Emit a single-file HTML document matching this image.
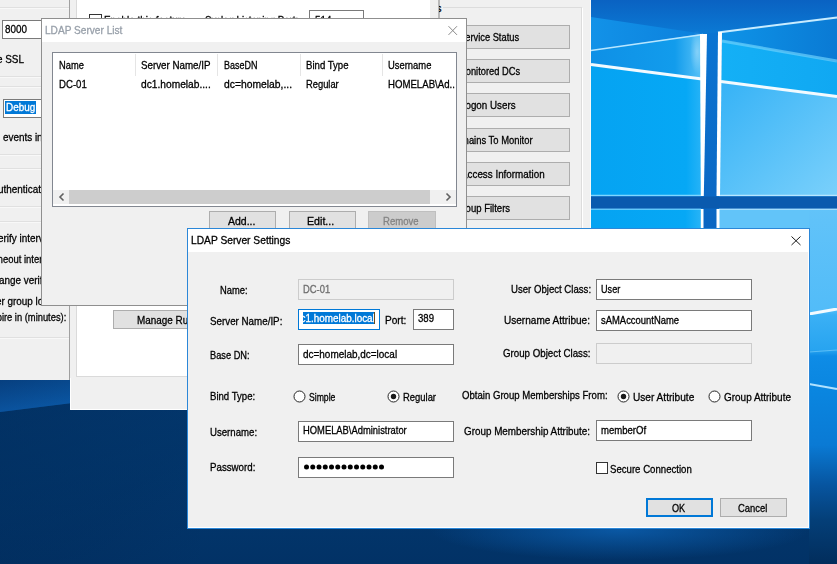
<!DOCTYPE html>
<html><head><meta charset="utf-8"><style>
html,body{margin:0;padding:0;width:837px;height:564px;overflow:hidden;background:#02336a;}
.a{position:absolute;}
.t{white-space:pre;font-family:'Liberation Sans', sans-serif;transform-origin:0 0;-webkit-text-stroke:0.3px currentColor;}
svg{position:absolute;left:0;top:0;}
</style></head><body>
<svg width="837" height="564" viewBox="0 0 837 564">
<defs>
 <linearGradient id="gnavy" x1="0" y1="0" x2="0" y2="1">
  <stop offset="0" stop-color="#04427e"/><stop offset="0.67" stop-color="#043f7a"/><stop offset="0.8" stop-color="#033a72"/><stop offset="1" stop-color="#023266"/>
 </linearGradient>
 <linearGradient id="gwedge" x1="0" y1="0" x2="1" y2="0">
  <stop offset="0" stop-color="#0a4a8e"/><stop offset="1" stop-color="#0b5aa6"/>
 </linearGradient>
 <linearGradient id="gwedge2" x1="0" y1="0" x2="1" y2="0"><stop offset="0" stop-color="#1292e8"/><stop offset="1" stop-color="#0c80dc"/></linearGradient>
 <linearGradient id="gvbar" x1="0" y1="0" x2="0" y2="1"><stop offset="0" stop-color="#0a74d2"/><stop offset="1" stop-color="#0b66c2"/></linearGradient>
 <linearGradient id="gmid" x1="0" y1="0" x2="1" y2="0"><stop offset="0" stop-color="#14b0f6"/><stop offset="1" stop-color="#10a8f2"/></linearGradient>
 <linearGradient id="gwedgev" x1="0" y1="0" x2="0" y2="1"><stop offset="0" stop-color="#03306a" stop-opacity="0.45"/><stop offset="1" stop-color="#0b5cae" stop-opacity="0.5"/></linearGradient>
 <linearGradient id="gleftdark" x1="0" y1="0" x2="1" y2="1"><stop offset="0" stop-color="#012a58" stop-opacity="0.6"/><stop offset="0.6" stop-color="#012a58" stop-opacity="0.35"/><stop offset="1" stop-color="#012a58" stop-opacity="0"/></linearGradient>
 <linearGradient id="gtop" gradientUnits="userSpaceOnUse" x1="0" y1="0" x2="0" y2="40"><stop offset="0" stop-color="#0a62c2"/><stop offset="1" stop-color="#0b7ed8"/></linearGradient>
 <linearGradient id="gul" x1="0" y1="0" x2="1" y2="0">
  <stop offset="0" stop-color="#05a3f2"/><stop offset="0.85" stop-color="#06a8f5"/><stop offset="1" stop-color="#2ab4f7"/>
 </linearGradient>
 <linearGradient id="gul2" x1="0" y1="0" x2="1" y2="0">
  <stop offset="0" stop-color="#0e90e6"/><stop offset="0.75" stop-color="#129cec"/><stop offset="1" stop-color="#5cc4f8"/>
 </linearGradient>
 <linearGradient id="gur" x1="0" y1="0" x2="1" y2="1">
  <stop offset="0" stop-color="#35b2f6"/><stop offset="1" stop-color="#7ad0fb"/>
 </linearGradient>
 <linearGradient id="gur2" x1="0" y1="0" x2="1" y2="0">
  <stop offset="0" stop-color="#0e94e8"/><stop offset="1" stop-color="#0a7ad4"/>
 </linearGradient>
 <linearGradient id="gright" x1="0" y1="0" x2="0" y2="1">
  <stop offset="0" stop-color="#62c3f9"/><stop offset="0.285" stop-color="#52bcf8"/><stop offset="0.299" stop-color="#3ab0f5"/>
  <stop offset="0.397" stop-color="#28a4f0"/><stop offset="0.414" stop-color="#0e8ce6"/><stop offset="0.510" stop-color="#0a86e0"/><stop offset="0.665" stop-color="#0a7ad4"/><stop offset="0.777" stop-color="#0755a0"/><stop offset="0.876" stop-color="#043f78"/><stop offset="1" stop-color="#022d5c"/>
 </linearGradient>
 <radialGradient id="gglow" cx="0.5" cy="0.5" r="0.5">
  <stop offset="0" stop-color="#0b5eae" stop-opacity="0.85"/><stop offset="1" stop-color="#0b5eae" stop-opacity="0"/>
 </radialGradient>
 <radialGradient id="gwglow" cx="0.5" cy="0.5" r="0.5">
  <stop offset="0" stop-color="#ffffff" stop-opacity="0.7"/><stop offset="1" stop-color="#ffffff" stop-opacity="0"/>
 </radialGradient>
 <filter id="blur1"><feGaussianBlur stdDeviation="0.7"/></filter>
 <filter id="blur2"><feGaussianBlur stdDeviation="2"/></filter>
</defs>
<rect x="0" y="0" width="837" height="564" fill="url(#gnavy)"/>
<rect x="0" y="400" width="200" height="164" fill="url(#gleftdark)"/>
<polygon points="0,378 72,378 72,403 0,412" fill="url(#gwedge)"/>
<polygon points="0,378 72,378 72,403 0,412" fill="url(#gwedgev)"/>
<ellipse cx="620" cy="530" rx="190" ry="30" fill="url(#gglow)"/>
<rect x="591" y="0" width="246" height="229" fill="url(#gtop)"/>
<polygon points="591,17 704,34 591,51" fill="url(#gwedge2)"/>
<polygon points="591,50 703,34 703,65 591,65" fill="url(#gul2)"/>
<polygon points="591,64.5 703,79 703,196 591,196" fill="url(#gul)"/>
<polygon points="591,50 703,34 703,79 591,64.5" fill="url(#gul2)"/>
<polygon points="718,32 837,17 837,62 722,40" fill="url(#gur2)"/>
<polygon points="722,40 837,62 837,97 721,81.5" fill="url(#gmid)"/>
<polygon points="721,81.5 837,97 837,196 719,196" fill="url(#gur)"/>
<line x1="722" y1="41" x2="837" y2="61" stroke="#6cd0fc" stroke-width="3" opacity="0.7" filter="url(#blur1)"/>
<polygon points="705,34 718,32 717,229 703,229" fill="url(#gvbar)"/>
<polygon points="591,209 702,209 702,229 591,229" fill="url(#gul)"/>
<polygon points="719,209 837,209 837,229 719,229" fill="#62c4f9"/>
<rect x="809" y="209" width="28" height="355" fill="url(#gright)"/>
<line x1="591" y1="50.5" x2="703" y2="34.5" stroke="#b8e6ff" stroke-width="1.5" filter="url(#blur1)"/>
<line x1="718" y1="32.5" x2="837" y2="17.5" stroke="#c8ecff" stroke-width="2" filter="url(#blur1)"/>
<line x1="591" y1="64.5" x2="702" y2="79" stroke="#f2faff" stroke-width="3" filter="url(#blur1)"/>
<line x1="721" y1="81.5" x2="837" y2="96.5" stroke="#f2faff" stroke-width="3" filter="url(#blur1)"/>
<line x1="591" y1="195.5" x2="701" y2="195.5" stroke="#7fd6ff" stroke-width="1.5"/>
<line x1="591" y1="209" x2="701" y2="209" stroke="#7fd6ff" stroke-width="1.5"/>
<line x1="719" y1="195.5" x2="837" y2="195.5" stroke="#b8e6ff" stroke-width="1.5"/>
<line x1="719" y1="209" x2="837" y2="209" stroke="#b8e6ff" stroke-width="1.5"/>
<ellipse cx="697" cy="52" rx="7" ry="22" fill="url(#gwglow)" opacity="0.45"/>
<polygon points="700,34 707,34 703.8,196 700.8,196" fill="#ffffff" filter="url(#blur1)"/>
<polygon points="700.8,209 703.5,209 703.5,229 700.8,229" fill="#ffffff" filter="url(#blur1)"/>
<polygon points="718,32 722,32 720,196 716.5,196" fill="#ffffff" filter="url(#blur1)"/>
<polygon points="716.5,209 719.5,209 719.5,229 716.5,229" fill="#ffffff" filter="url(#blur1)"/>
<rect x="591" y="196.5" width="246" height="12" fill="#0a5aae"/>
<line x1="809" y1="314" x2="837" y2="309" stroke="#f2faff" stroke-width="3" filter="url(#blur1)"/>
<line x1="809" y1="352" x2="837" y2="350" stroke="#7fd0fa" stroke-width="1.2" opacity="0.6" filter="url(#blur1)"/>
<line x1="809" y1="384" x2="837" y2="389" stroke="#b0e2ff" stroke-width="2" filter="url(#blur1)"/>
</svg>
<div class="a" style="left:0px;top:0px;width:69px;height:380px;background:#f0f0f0;"></div>
<div class="a" style="left:69px;top:0px;width:1px;height:380px;background:#a0a0a0;"></div>
<div class="a" style="left:0px;top:7px;width:69px;height:1px;background:#e0e0e0;"></div>
<div class="a" style="left:0px;top:8px;width:69px;height:1px;background:#f8f8f8;"></div>
<div class="a" style="left:0px;top:76px;width:69px;height:1px;background:#e0e0e0;"></div>
<div class="a" style="left:0px;top:77px;width:69px;height:1px;background:#f8f8f8;"></div>
<div class="a" style="left:0px;top:86px;width:69px;height:1px;background:#e0e0e0;"></div>
<div class="a" style="left:0px;top:87px;width:69px;height:1px;background:#f8f8f8;"></div>
<div class="a" style="left:0px;top:154px;width:69px;height:1px;background:#e0e0e0;"></div>
<div class="a" style="left:0px;top:155px;width:69px;height:1px;background:#f8f8f8;"></div>
<div class="a" style="left:0px;top:168px;width:69px;height:1px;background:#e0e0e0;"></div>
<div class="a" style="left:0px;top:169px;width:69px;height:1px;background:#f8f8f8;"></div>
<div class="a" style="left:0px;top:206px;width:69px;height:1px;background:#e0e0e0;"></div>
<div class="a" style="left:0px;top:207px;width:69px;height:1px;background:#f8f8f8;"></div>
<div class="a" style="left:0px;top:221px;width:69px;height:1px;background:#e0e0e0;"></div>
<div class="a" style="left:0px;top:222px;width:69px;height:1px;background:#f8f8f8;"></div>
<div class="a" style="left:0px;top:337px;width:69px;height:1px;background:#e0e0e0;"></div>
<div class="a" style="left:0px;top:338px;width:69px;height:1px;background:#f8f8f8;"></div>
<div class="a" style="left:2px;top:20px;width:60px;height:19px;background:#fff;box-sizing:border-box;border:1px solid #7a7a7a;"></div>
<div class="a t" style="left:5.00px;top:24px;font-size:11px;line-height:11px;color:#000;transform:scaleX(0.8952);">8000</div>
<div class="a t" style="left:-3.00px;top:54px;font-size:11px;line-height:11px;color:#000;transform:scaleX(0.9000);">e SSL</div>
<div class="a" style="left:3px;top:99px;width:60px;height:19px;background:#fff;box-sizing:border-box;border:1px solid #7a7a7a;"></div>
<div class="a" style="left:5px;top:101px;width:31px;height:13px;background:#0078d7;"></div>
<div class="a t" style="left:6.00px;top:102px;font-size:11px;line-height:11px;color:#fff;transform:scaleX(0.9000);">Debug</div>
<div class="a t" style="left:3.00px;top:132px;font-size:11px;line-height:11px;color:#000;transform:scaleX(0.9000);">events in</div>
<div class="a t" style="left:-2.50px;top:184px;font-size:11px;line-height:11px;color:#000;transform:scaleX(0.9000);">uthenticat</div>
<div class="a t" style="left:-2.00px;top:233px;font-size:11px;line-height:11px;color:#000;transform:scaleX(0.9000);">erify interv</div>
<div class="a t" style="left:-5.50px;top:254px;font-size:11px;line-height:11px;color:#000;transform:scaleX(0.8600);">meout inter</div>
<div class="a t" style="left:-1.00px;top:275px;font-size:11px;line-height:11px;color:#000;transform:scaleX(0.9000);">ange verif</div>
<div class="a t" style="left:-4.50px;top:296px;font-size:11px;line-height:11px;color:#000;transform:scaleX(0.9000);">er group lo</div>
<div class="a t" style="left:-8.25px;top:312px;font-size:11px;line-height:11px;color:#000;transform:scaleX(0.8500);">xpire in (minutes):</div>
<div class="a" style="left:70px;top:0px;width:521px;height:410px;background:#f0f0f0;"></div>
<div class="a" style="left:70px;top:409px;width:521px;height:1px;background:#ffffff;"></div>
<div class="a" style="left:70px;top:378px;width:1px;height:32px;background:#ffffff;"></div>
<div class="a" style="left:590px;top:0px;width:1px;height:410px;background:#f8f8f8;"></div>
<div class="a" style="left:77px;top:0px;width:353px;height:376px;background:#ffffff;"></div>
<div class="a" style="left:76px;top:0px;width:1px;height:377px;background:#dadada;"></div>
<div class="a" style="left:76px;top:376px;width:355px;height:1px;background:#dadada;"></div>
<div class="a" style="left:438px;top:0px;width:2px;height:410px;background:#b8b8b8;"></div>
<div class="a" style="left:443px;top:7px;width:139px;height:1px;background:#dcdcdc;"></div>
<div class="a" style="left:581px;top:7px;width:1px;height:380px;background:#dcdcdc;"></div>
<div class="a" style="left:582px;top:8px;width:1px;height:380px;background:#ffffff;"></div>
<div class="a" style="left:439px;top:0;width:3px;height:15px;overflow:hidden"><div class="a t" style="left:-3px;top:3px;font-size:11px;line-height:11px;color:#000">s</div></div>
<div class="a" style="left:89px;top:14px;width:13px;height:13px;background:#fff;box-sizing:border-box;border:1px solid #333;"></div>
<div class="a t" style="left:104.00px;top:15px;font-size:11px;line-height:11px;color:#000;transform:scaleX(0.9000);">Enable this feature</div>
<div class="a t" style="left:205.00px;top:15px;font-size:11px;line-height:11px;color:#000;transform:scaleX(0.8746);">Syslog Listening Port:</div>
<div class="a" style="left:309px;top:10px;width:55px;height:20px;background:#fff;box-sizing:border-box;border:1px solid #7a7a7a;"></div>
<div class="a t" style="left:315.00px;top:15px;font-size:11px;line-height:11px;color:#000;transform:scaleX(0.9000);">514</div>
<div class="a" style="left:400px;top:25px;width:170px;height:24px;background:#e1e1e1;box-sizing:border-box;border:1px solid #adadad;"></div>
<div class="a t" style="left:458.70px;top:32px;font-size:11px;line-height:11px;color:#000;transform:scaleX(0.8471);">Service Status</div>
<div class="a" style="left:400px;top:59px;width:170px;height:24px;background:#e1e1e1;box-sizing:border-box;border:1px solid #adadad;"></div>
<div class="a t" style="left:457.50px;top:66px;font-size:11px;line-height:11px;color:#000;transform:scaleX(0.8462);">Monitored DCs</div>
<div class="a" style="left:400px;top:93px;width:170px;height:24px;background:#e1e1e1;box-sizing:border-box;border:1px solid #adadad;"></div>
<div class="a t" style="left:459.50px;top:100px;font-size:11px;line-height:11px;color:#000;transform:scaleX(0.8907);">Logon Users</div>
<div class="a" style="left:400px;top:128px;width:170px;height:24px;background:#e1e1e1;box-sizing:border-box;border:1px solid #adadad;"></div>
<div class="a t" style="left:449.00px;top:135px;font-size:11px;line-height:11px;color:#000;transform:scaleX(0.8558);">Domains To Monitor</div>
<div class="a" style="left:400px;top:162px;width:170px;height:24px;background:#e1e1e1;box-sizing:border-box;border:1px solid #adadad;"></div>
<div class="a t" style="left:461.30px;top:169px;font-size:11px;line-height:11px;color:#000;transform:scaleX(0.8938);">Access Information</div>
<div class="a" style="left:400px;top:196px;width:170px;height:24px;background:#e1e1e1;box-sizing:border-box;border:1px solid #adadad;"></div>
<div class="a t" style="left:454.50px;top:203px;font-size:11px;line-height:11px;color:#000;transform:scaleX(0.8662);">Group Filters</div>
<div class="a" style="left:113px;top:310px;width:120px;height:19px;background:#e1e1e1;box-sizing:border-box;border:1px solid #adadad;"></div>
<div class="a t" style="left:136.70px;top:315px;font-size:11px;line-height:11px;color:#000;transform:scaleX(0.9000);">Manage Rules</div>
<div class="a" style="left:41px;top:18px;width:426px;height:288px;background:#f0f0f0;box-sizing:border-box;border:1px solid #8f8f8f;"></div>
<div class="a" style="left:42px;top:19px;width:424px;height:23px;background:#ffffff;"></div>
<div class="a t" style="left:45.00px;top:25px;font-size:11px;line-height:11px;color:#98a0aa;transform:scaleX(0.9193);">LDAP Server List</div>
<svg class="a" style="left:446.5px;top:24.5px" width="12" height="12"><path d="M1.5 1.2L10 9.9M10 1.2L1.5 9.9" stroke="#8a8a8a" stroke-width="1"/></svg>
<div class="a" style="left:52px;top:52px;width:405px;height:155px;background:#ffffff;box-sizing:border-box;border:1px solid #828790;"></div>
<div class="a" style="left:135px;top:54px;width:1px;height:22px;background:#e5e5e5;"></div>
<div class="a" style="left:217px;top:54px;width:1px;height:22px;background:#e5e5e5;"></div>
<div class="a" style="left:300px;top:54px;width:1px;height:22px;background:#e5e5e5;"></div>
<div class="a" style="left:382px;top:54px;width:1px;height:22px;background:#e5e5e5;"></div>
<div class="a t" style="left:59.00px;top:60px;font-size:11px;line-height:11px;color:#000;transform:scaleX(0.8452);">Name</div>
<div class="a t" style="left:141.00px;top:60px;font-size:11px;line-height:11px;color:#000;transform:scaleX(0.8882);">Server Name/IP</div>
<div class="a t" style="left:224.00px;top:60px;font-size:11px;line-height:11px;color:#000;transform:scaleX(0.8168);">BaseDN</div>
<div class="a t" style="left:306.00px;top:60px;font-size:11px;line-height:11px;color:#000;transform:scaleX(0.8729);">Bind Type</div>
<div class="a t" style="left:388.00px;top:60px;font-size:11px;line-height:11px;color:#000;transform:scaleX(0.8553);">Username</div>
<div class="a t" style="left:59.00px;top:79px;font-size:11px;line-height:11px;color:#000;transform:scaleX(0.8747);">DC-01</div>
<div class="a t" style="left:141.00px;top:79px;font-size:11px;line-height:11px;color:#000;transform:scaleX(0.9274);">dc1.homelab....</div>
<div class="a t" style="left:224.00px;top:79px;font-size:11px;line-height:11px;color:#000;transform:scaleX(0.9392);">dc=homelab,...</div>
<div class="a t" style="left:306.00px;top:79px;font-size:11px;line-height:11px;color:#000;transform:scaleX(0.8492);">Regular</div>
<div class="a t" style="left:388.00px;top:79px;font-size:11px;line-height:11px;color:#000;transform:scaleX(0.8748);">HOMELAB\Ad..</div>
<div class="a" style="left:53px;top:190px;width:403px;height:14px;background:#f0f0f0;"></div>
<div class="a" style="left:69px;top:190px;width:361px;height:14px;background:#cdcdcd;"></div>
<svg class="a" style="left:57px;top:192px" width="10" height="10"><path d="M6.5 1.5L3 5L6.5 8.5" fill="none" stroke="#606060" stroke-width="1.6"/></svg>
<svg class="a" style="left:443px;top:192px" width="10" height="10"><path d="M3.5 1.5L7 5L3.5 8.5" fill="none" stroke="#606060" stroke-width="1.6"/></svg>
<div class="a" style="left:209px;top:211px;width:67px;height:24px;background:#e1e1e1;box-sizing:border-box;border:1px solid #adadad;"></div>
<div class="a t" style="left:228.00px;top:216px;font-size:11px;line-height:11px;color:#000;transform:scaleX(0.9552);">Add...</div>
<div class="a" style="left:289px;top:211px;width:67px;height:24px;background:#e1e1e1;box-sizing:border-box;border:1px solid #adadad;"></div>
<div class="a t" style="left:307.30px;top:216px;font-size:11px;line-height:11px;color:#000;transform:scaleX(0.9691);">Edit...</div>
<div class="a" style="left:368px;top:211px;width:68px;height:24px;background:#cccccc;box-sizing:border-box;border:1px solid #bfbfbf;"></div>
<div class="a t" style="left:383.20px;top:216px;font-size:11px;line-height:11px;color:#838383;transform:scaleX(0.8667);">Remove</div>
<div class="a" style="left:187px;top:228px;width:623px;height:301px;background:#f0f0f0;box-sizing:border-box;border:1px solid #2b87d8;"></div>
<div class="a" style="left:808px;top:252px;width:1px;height:276px;background:#ffffff;"></div>
<div class="a" style="left:188px;top:527px;width:621px;height:1px;background:#ffffff;"></div>
<div class="a" style="left:188px;top:229px;width:621px;height:23px;background:#ffffff;"></div>
<div class="a t" style="left:191.25px;top:235px;font-size:11px;line-height:11px;color:#000;transform:scaleX(0.9303);">LDAP Server Settings</div>
<svg class="a" style="left:790px;top:235px" width="12" height="12"><path d="M1.5 1.5L10.5 10M10.5 1.5L1.5 10" stroke="#1a1a1a" stroke-width="1"/></svg>
<div class="a t" style="left:220.00px;top:285px;font-size:11px;line-height:11px;color:#000;transform:scaleX(0.8503);">Name:</div>
<div class="a t" style="left:209.70px;top:316px;font-size:11px;line-height:11px;color:#000;transform:scaleX(0.8899);">Server Name/IP:</div>
<div class="a t" style="left:385.00px;top:315px;font-size:11px;line-height:11px;color:#000;transform:scaleX(0.9191);">Port:</div>
<div class="a t" style="left:209.70px;top:350px;font-size:11px;line-height:11px;color:#000;transform:scaleX(0.8401);">Base DN:</div>
<div class="a t" style="left:209.70px;top:391px;font-size:11px;line-height:11px;color:#000;transform:scaleX(0.8725);">Bind Type:</div>
<div class="a t" style="left:209.70px;top:427px;font-size:11px;line-height:11px;color:#000;transform:scaleX(0.8746);">Username:</div>
<div class="a t" style="left:209.70px;top:462px;font-size:11px;line-height:11px;color:#000;transform:scaleX(0.8831);">Password:</div>
<div class="a t" style="left:510.70px;top:284px;font-size:11px;line-height:11px;color:#000;transform:scaleX(0.8730);">User Object Class:</div>
<div class="a t" style="left:504.00px;top:315px;font-size:11px;line-height:11px;color:#000;transform:scaleX(0.9134);">Username Attribue:</div>
<div class="a t" style="left:503.00px;top:348px;font-size:11px;line-height:11px;color:#000;transform:scaleX(0.8840);">Group Object Class:</div>
<div class="a t" style="left:462.00px;top:390px;font-size:11px;line-height:11px;color:#000;transform:scaleX(0.8721);">Obtain Group Memberships From:</div>
<div class="a t" style="left:464.00px;top:426px;font-size:11px;line-height:11px;color:#000;transform:scaleX(0.8961);">Group Membership Attribute:</div>
<div class="a t" style="left:610.00px;top:464px;font-size:11px;line-height:11px;color:#000;transform:scaleX(0.8743);">Secure Connection</div>
<div class="a" style="left:298px;top:279px;width:156px;height:21px;background:#f0f0f0;box-sizing:border-box;border:1px solid #cccccc;"></div>
<div class="a t" style="left:303.00px;top:284px;font-size:11px;line-height:11px;color:#6d6d6d;transform:scaleX(0.8526);">DC-01</div>
<div class="a" style="left:298px;top:309px;width:82px;height:21px;background:#ffffff;box-sizing:border-box;border:1px solid #0078d7;"></div>
<div class="a" style="left:303px;top:312px;width:72px;height:12px;background:#0078d7;"></div>
<div class="a" style="left:374px;top:312px;width:1px;height:12px;background:#6b4a1a;"></div>
<div class="a" style="left:300px;top:311px;width:74px;height:16px;overflow:hidden"><div class="a t" style="left:-5px;top:2px;font-size:11px;line-height:11px;color:#fff;transform:scaleX(0.9)">dc1.homelab.local</div></div>
<div class="a" style="left:413px;top:309px;width:41px;height:21px;background:#ffffff;box-sizing:border-box;border:1px solid #7a7a7a;"></div>
<div class="a t" style="left:418.30px;top:313px;font-size:11px;line-height:11px;color:#000;transform:scaleX(0.8719);">389</div>
<div class="a" style="left:298px;top:344px;width:156px;height:21px;background:#ffffff;box-sizing:border-box;border:1px solid #7a7a7a;"></div>
<div class="a t" style="left:303.00px;top:349px;font-size:11px;line-height:11px;color:#000;transform:scaleX(0.9052);">dc=homelab,dc=local</div>
<div class="a" style="left:298px;top:421px;width:156px;height:21px;background:#ffffff;box-sizing:border-box;border:1px solid #7a7a7a;"></div>
<div class="a t" style="left:303.00px;top:425px;font-size:11px;line-height:11px;color:#000;transform:scaleX(0.8526);">HOMELAB\Administrator</div>
<div class="a" style="left:298px;top:457px;width:156px;height:21px;background:#ffffff;box-sizing:border-box;border:1px solid #7a7a7a;"></div>
<svg class="a" style="left:0;top:0" width="837" height="564"><circle cx="306.50" cy="467" r="2.5" fill="#000"/><circle cx="312.75" cy="467" r="2.5" fill="#000"/><circle cx="319.00" cy="467" r="2.5" fill="#000"/><circle cx="325.25" cy="467" r="2.5" fill="#000"/><circle cx="331.50" cy="467" r="2.5" fill="#000"/><circle cx="337.75" cy="467" r="2.5" fill="#000"/><circle cx="344.00" cy="467" r="2.5" fill="#000"/><circle cx="350.25" cy="467" r="2.5" fill="#000"/><circle cx="356.50" cy="467" r="2.5" fill="#000"/><circle cx="362.75" cy="467" r="2.5" fill="#000"/><circle cx="369.00" cy="467" r="2.5" fill="#000"/><circle cx="375.25" cy="467" r="2.5" fill="#000"/><circle cx="381.50" cy="467" r="2.5" fill="#000"/></svg>
<div class="a" style="left:596px;top:279px;width:156px;height:21px;background:#ffffff;box-sizing:border-box;border:1px solid #7a7a7a;"></div>
<div class="a t" style="left:600.80px;top:284px;font-size:11px;line-height:11px;color:#000;transform:scaleX(0.8276);">User</div>
<div class="a" style="left:596px;top:310px;width:156px;height:21px;background:#ffffff;box-sizing:border-box;border:1px solid #7a7a7a;"></div>
<div class="a t" style="left:600.80px;top:315px;font-size:11px;line-height:11px;color:#000;transform:scaleX(0.8574);">sAMAccountName</div>
<div class="a" style="left:596px;top:343px;width:156px;height:21px;background:#f0f0f0;box-sizing:border-box;border:1px solid #cccccc;"></div>
<div class="a" style="left:596px;top:420px;width:156px;height:21px;background:#ffffff;box-sizing:border-box;border:1px solid #7a7a7a;"></div>
<div class="a t" style="left:600.80px;top:425px;font-size:11px;line-height:11px;color:#000;transform:scaleX(0.8677);">memberOf</div>
<svg class="a" style="left:293px;top:390px" width="13" height="13"><circle cx="6.5" cy="6.5" r="5.5" fill="#fff" stroke="#262626" stroke-width="1"/></svg>
<div class="a t" style="left:308.70px;top:392px;font-size:11px;line-height:11px;color:#000;transform:scaleX(0.7849);">Simple</div>
<svg class="a" style="left:387px;top:390px" width="13" height="13"><circle cx="6.5" cy="6.5" r="5.5" fill="#fff" stroke="#262626" stroke-width="1"/><circle cx="6.5" cy="6.5" r="2.7" fill="#1a1a1a"/></svg>
<div class="a t" style="left:402.50px;top:392px;font-size:11px;line-height:11px;color:#000;transform:scaleX(0.8570);">Regular</div>
<svg class="a" style="left:617px;top:390px" width="13" height="13"><circle cx="6.5" cy="6.5" r="5.5" fill="#fff" stroke="#262626" stroke-width="1"/><circle cx="6.5" cy="6.5" r="2.7" fill="#1a1a1a"/></svg>
<div class="a t" style="left:633.00px;top:392px;font-size:11px;line-height:11px;color:#000;transform:scaleX(0.9191);">User Attribute</div>
<svg class="a" style="left:708px;top:390px" width="13" height="13"><circle cx="6.5" cy="6.5" r="5.5" fill="#fff" stroke="#262626" stroke-width="1"/></svg>
<div class="a t" style="left:723.60px;top:392px;font-size:11px;line-height:11px;color:#000;transform:scaleX(0.9050);">Group Attribute</div>
<div class="a" style="left:596px;top:462px;width:12px;height:12px;background:#fff;box-sizing:border-box;border:1px solid #333;"></div>
<div class="a" style="left:646px;top:498px;width:67px;height:19px;background:#e1e1e1;box-sizing:border-box;border:2px solid #0078d7;"></div>
<div class="a t" style="left:671.70px;top:503px;font-size:11px;line-height:11px;color:#000;transform:scaleX(0.8275);">OK</div>
<div class="a" style="left:720px;top:498px;width:67px;height:19px;background:#e1e1e1;box-sizing:border-box;border:1px solid #adadad;"></div>
<div class="a t" style="left:738.00px;top:503px;font-size:11px;line-height:11px;color:#000;transform:scaleX(0.8551);">Cancel</div>
</body></html>
